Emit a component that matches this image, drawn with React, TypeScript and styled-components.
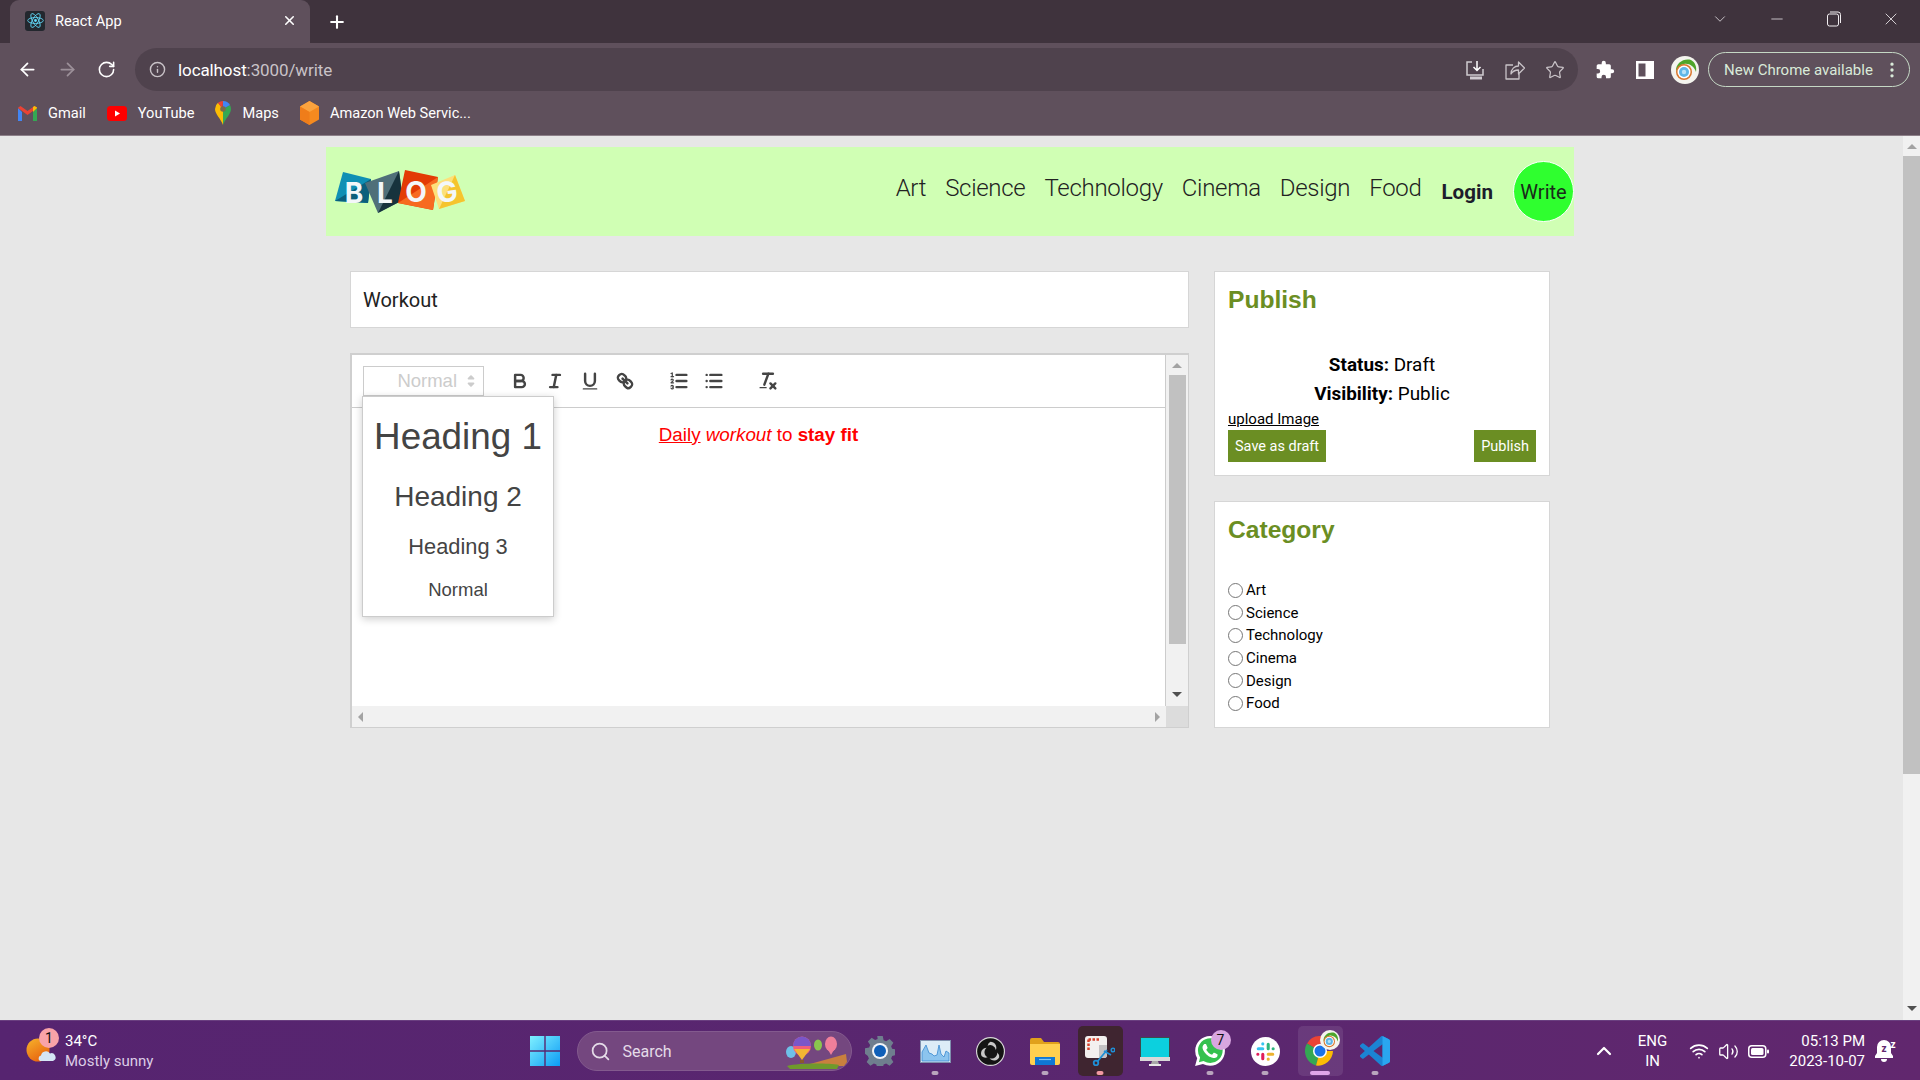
import React from "react";
import styled, { createGlobalStyle } from "styled-components";
import {
  ArrowLeft,
  ArrowRight,
  RotateCw,
  Info,
  Star,
  ChevronDown,
  ChevronUp,
  Minus,
  X,
  Plus,
  Search,
  Wifi,
  Volume2,
  MoreVertical,
} from "lucide-react";

const UI_FONT = `"Roboto", "Liberation Sans", sans-serif`;
const PAGE_FONT = `"Roboto", "Open Sans", sans-serif`;
const QUILL_FONT = `"Liberation Sans", Arial, sans-serif`;

const GlobalStyle = createGlobalStyle`
  html, body { margin: 0; padding: 0; height: 100%; overflow: hidden; }
  body { font-family: ${UI_FONT}; background: #e7e7e7; }
  * { box-sizing: border-box; }
`;

const Screen = styled.div`
  width: 1920px;
  height: 1080px;
  display: flex;
  flex-direction: column;
`;

/* ---------- browser chrome ---------- */

const TabStrip = styled.div`
  height: 43px;
  background: #3f333d;
  display: flex;
  align-items: stretch;
  padding-left: 10px;
  color: #fff;
`;

const Tab = styled.div`
  width: 300px;
  background: #5f505c;
  border-radius: 9px 9px 0 0;
  display: flex;
  align-items: center;
  padding: 0 13px 2px 15px;
  gap: 10px;
  font-size: 14.6px;
`;

const Favicon = styled.div`
  width: 20px;
  height: 20px;
  border-radius: 3px;
  background: #23272e;
  display: flex;
  align-items: center;
  justify-content: center;
`;

const TabTitle = styled.span`
  flex: 1;
`;

const NewTab = styled.div`
  width: 54px;
  display: flex;
  align-items: center;
  justify-content: center;
`;

const WindowControls = styled.div`
  margin-left: auto;
  display: flex;
  align-items: center;
  padding: 0 1px 5px 0;
`;

const WindowButton = styled.div`
  width: 57px;
  display: flex;
  justify-content: center;
  color: #f2eef1;
`;

const ToolbarRow = styled.div`
  height: 48px;
  background: #5f505c;
  display: flex;
  align-items: center;
  padding: 5px 10px 0 0;
`;

const NavIcons = styled.div`
  width: 135px;
  display: flex;
  align-items: center;
  padding-left: 17px;
  gap: 19px;
  color: #fff;
`;

const UrlBar = styled.div`
  width: 1443px;
  height: 43px;
  border-radius: 22px;
  background: #4f424d;
  display: flex;
  align-items: center;
  padding: 0 13px 0 14px;
  color: #c9c3c8;
`;

const UrlText = styled.span`
  margin-left: 12px;
  font-size: 17px;
  color: #fff;
  flex: 1;
  letter-spacing: -0.1px;

  span {
    color: #c9c3c8;
  }
`;

const UrlActions = styled.div`
  display: flex;
  gap: 20px;
  align-items: center;
`;

const ExtIcons = styled.div`
  display: flex;
  align-items: center;
  margin-left: 17px;
  color: #fff;

  svg:nth-child(2) {
    margin: 0 17px 0 21px;
  }
`;

const UpdateChip = styled.div`
  margin-left: 9px;
  width: 202px;
  height: 35px;
  border: 1px solid #c5d8c5;
  border-radius: 18px;
  display: flex;
  align-items: center;
  justify-content: space-between;
  padding: 0 7px 0 15px;
  font-size: 15px;
  color: #d9ead9;
`;

const BookmarkRow = styled.div`
  height: 45px;
  background: #5f505c;
  border-bottom: 1px solid #8d8089;
  display: flex;
  align-items: center;
  padding-left: 18px;
  gap: 21px;
`;

const Bookmark = styled.div`
  display: flex;
  align-items: center;
  gap: 11px;
  color: #fff;
  font-size: 14.6px;
`;

/* ---------- page ---------- */

const Viewport = styled.div`
  flex: 1;
  min-height: 0;
  display: flex;
`;

const Page = styled.div`
  flex: 1;
  background: #e7e7e7;
  padding-top: 11px;
  font-family: ${PAGE_FONT};
`;

const Container = styled.div`
  width: 1248px;
  margin-left: 326px;
`;

const Navbar = styled.div`
  height: 89px;
  background: #d0ffb4;
  display: flex;
  align-items: center;
  padding-left: 8px;
`;

const NavLinks = styled.div`
  margin-left: auto;
  display: flex;
  align-items: center;
  gap: 19px;
  color: #222;
`;

const NavLink = styled.span`
  font-size: 24px;
  font-weight: 300;
  letter-spacing: -0.3px;
  margin-top: -8px;
`;

const Login = styled.span`
  font-size: 20.6px;
  font-weight: 700;
  color: #1d1d2b;
  margin: 0 1px;
`;

const WriteButton = styled.div`
  width: 61px;
  height: 61px;
  border-radius: 50%;
  background: #2fff2f;
  border: 1px solid #fff;
  display: flex;
  align-items: center;
  justify-content: center;
  font-size: 20px;
  font-weight: 400;
  color: #1a2a1a;
`;

const Content = styled.div`
  display: flex;
  gap: 25px;
  padding: 35px 24px 0;
`;

const MainColumn = styled.div`
  width: 839px;
  display: flex;
  flex-direction: column;
  gap: 25px;
`;

const TitleInput = styled.div`
  height: 57px;
  background: #fff;
  border: 1px solid #d6d6d6;
  display: flex;
  align-items: center;
  padding-left: 12px;
  font-size: 20px;
  color: #222;
`;

const EditorFrame = styled.div`
  position: relative;
  height: 375px;
  display: grid;
  grid-template-columns: 1fr 22px;
  grid-template-rows: 1fr 21px;
  border: solid #cfcfcf;
  border-width: 2px 1px 1px 2px;
  font-family: ${QUILL_FONT};
`;

const EditorPane = styled.div`
  background: #fff;
  border-right: 1px solid #ccc;
  display: flex;
  flex-direction: column;
`;

const QuillToolbar = styled.div`
  height: 53px;
  border-bottom: 1px solid #ccc;
  display: flex;
  align-items: center;
  padding-left: 11px;
`;

const PickerLabel = styled.div`
  width: 121px;
  height: 31px;
  margin-right: 18px;
  border: 1px solid #ccc;
  border-bottom-width: 2px;
  display: flex;
  align-items: center;
  justify-content: flex-end;
  padding-right: 1px;
  gap: 3px;
  color: #ccc;
  font-size: 18.5px;
`;

const QuillGroup = styled.div`
  display: flex;
  margin-right: 19px;
`;

const QuillButton = styled.div`
  width: 35px;
  display: flex;
  justify-content: center;
`;

const QuillBody = styled.div`
  flex: 1;
  padding-top: 14px;
  text-align: center;
  font-size: 18.8px;
  line-height: 26px;
  color: #f00;
`;

const PickerMenu = styled.div`
  position: absolute;
  left: 10px;
  top: 41px;
  width: 192px;
  height: 221px;
  background: #fff;
  border: 1px solid #ccc;
  box-shadow: rgba(0, 0, 0, 0.2) 0 2px 8px;
  display: flex;
  flex-direction: column;
  align-items: center;
  color: #444;
`;

const PickerItem = styled.div<{ $size: number; $top: number }>`
  font-size: ${(p) => p.$size}px;
  line-height: 1;
  margin-top: ${(p) => p.$top}px;
`;

const VTrack = styled.div`
  background: #f1f1f1;
  display: flex;
  flex-direction: column;
  align-items: center;
  padding-top: 8px;
`;

const VThumb = styled.div`
  width: 17px;
  height: 269px;
  margin: 7px 0 48px;
  background: #c1c1c1;
`;

const HTrack = styled.div`
  background: #f1f1f1;
  display: flex;
  align-items: center;
  justify-content: space-between;
  padding: 0 6px;
`;

const ScrollCorner = styled.div`
  background: #dcdcdc;
`;

const SideColumn = styled.div`
  width: 336px;
  display: flex;
  flex-direction: column;
  gap: 25px;
`;

const Panel = styled.div<{ $height: number }>`
  height: ${(p) => p.$height}px;
  background: #fff;
  border: 1px solid #d6d6d6;
  padding: 0 13px;
  font-size: 18.9px;
  color: #000;
`;

const PanelTitle = styled.h2`
  margin: 13px 0 0;
  font-family: ${QUILL_FONT};
  font-size: 24.6px;
  font-weight: 700;
  line-height: 30px;
  color: #6b8e23;
`;

const MetaLine = styled.div<{ $top?: number }>`
  margin-top: ${(p) => p.$top ?? 0}px;
  text-align: center;
  line-height: 29px;
`;

const UploadLink = styled.div`
  font-size: 15px;
  line-height: 22px;
  text-decoration: underline;
`;

const PanelActions = styled.div`
  display: flex;
  justify-content: space-between;
`;

const GreenButton = styled.div`
  height: 32px;
  padding: 0 7px;
  background: #6b8e23;
  color: #fff;
  font-size: 14.5px;
  display: flex;
  align-items: center;
`;

const RadioList = styled.div`
  margin-top: 34px;
  display: flex;
  flex-direction: column;
`;

const RadioRow = styled.label`
  height: 22.6px;
  display: flex;
  align-items: center;
  gap: 3px;
  font-size: 15px;

  input {
    width: 15px;
    height: 15px;
    margin: 0;
  }
`;

const PageScrollbar = styled.div`
  width: 17px;
  background: #f1f1f1;
  display: flex;
  flex-direction: column;
  align-items: center;
  padding-top: 8px;
`;

const PageThumb = styled.div`
  width: 17px;
  height: 618px;
  margin: 7px 0 232px;
  background: #c1c1c1;
`;

const Arrow = styled.div<{ $dir: "up" | "down" | "left" | "right"; $dark?: boolean }>`
  width: 0;
  height: 0;
  border: 5px solid transparent;
  ${(p) => {
    const colour = p.$dark ? "#505050" : "#a3a3a3";
    switch (p.$dir) {
      case "up":
        return `border-top-width: 0; border-bottom: 5px solid ${colour};`;
      case "down":
        return `border-bottom-width: 0; border-top: 5px solid ${colour};`;
      case "left":
        return `border-left-width: 0; border-right: 5px solid ${colour};`;
      default:
        return `border-right-width: 0; border-left: 5px solid ${colour};`;
    }
  }}
`;

/* ---------- taskbar ---------- */

const Taskbar = styled.div`
  height: 60px;
  background: linear-gradient(90deg, #562470 0%, #5a276f 60%, #61276e 100%);
  border-top: 1px solid #6a3f80;
  display: grid;
  grid-template-columns: 1fr auto 1fr;
  align-items: center;
  color: #fff;
`;

const Weather = styled.div`
  display: flex;
  align-items: center;
  gap: 5px;
  padding-left: 26px;
  font-size: 15px;
  line-height: 20px;
`;

const WeatherIcon = styled.div`
  position: relative;
  width: 34px;
  height: 34px;
`;

const Badge = styled.span<{ $bg: string; $left: number; $top: number }>`
  position: absolute;
  left: ${(p) => p.$left}px;
  top: ${(p) => p.$top}px;
  width: 20px;
  height: 20px;
  border-radius: 50%;
  background: ${(p) => p.$bg};
  color: #111;
  font-size: 14px;
  line-height: 20px;
  text-align: center;
`;

const WeatherSub = styled.div`
  color: #dccde6;
`;

const CenterIcons = styled.div`
  display: flex;
  align-items: center;
`;

const Slot = styled.div<{ $tone?: "dark" | "light" }>`
  position: relative;
  width: 55px;
  height: 60px;
  display: flex;
  align-items: center;
  justify-content: center;

  &::before {
    content: "";
    position: absolute;
    inset: 5px;
    border-radius: 5px;
    background: ${(p) =>
      p.$tone === "dark" ? "#3f2530" : p.$tone === "light" ? "rgba(255,255,255,0.09)" : "transparent"};
  }

  svg {
    position: relative;
  }
`;

const Dot = styled.span<{ $colour?: string; $wide?: boolean }>`
  position: absolute;
  bottom: 6px;
  left: 50%;
  width: ${(p) => (p.$wide ? 20 : 7)}px;
  height: 4px;
  border-radius: 2px;
  transform: translateX(-50%);
  background: ${(p) => p.$colour ?? "#b9a5bd"};
`;

const AvatarBadge = styled.span`
  position: absolute;
  left: 27px;
  top: 9px;
`;

const SearchBox = styled.div`
  position: relative;
  width: 275px;
  height: 40px;
  margin-left: 4px;
  margin-right: 1px;
  border-radius: 20px;
  background: #74477f;
  border: 1px solid #835a8e;
  display: flex;
  align-items: center;
  padding-left: 12px;
  gap: 12px;
  font-size: 16px;
  color: #e4dbe8;
`;

const SearchArt = styled.svg`
  position: absolute;
  right: 3px;
  top: 4px;
`;

const Tray = styled.div`
  display: flex;
  align-items: center;
  justify-content: flex-end;
  font-size: 15px;
`;

const TrayLang = styled.div`
  text-align: center;
  line-height: 20px;
  margin: 0 22px;
`;

const TrayIcons = styled.div`
  display: flex;
  align-items: center;
  gap: 9px;
`;

const Clock = styled.div`
  text-align: right;
  line-height: 20px;
  margin-left: 20px;
`;

const BellWrap = styled.div`
  width: 55px;
  padding-right: 14px;
  display: flex;
  justify-content: center;
`;

/* ---------- drawings ---------- */

const ReactMark = () => (
  <svg width="17" height="17" viewBox="-12 -12 24 24" fill="none" stroke="#61dafb" strokeWidth="1.2">
    <circle r="2" fill="#61dafb" stroke="none" />
    <ellipse rx="11" ry="4.2" />
    <ellipse rx="11" ry="4.2" transform="rotate(60)" />
    <ellipse rx="11" ry="4.2" transform="rotate(120)" />
  </svg>
);

const GmailIcon = () => (
  <svg width="19" height="15" viewBox="0 0 19 15">
    <path d="M0 2v13h4V6z" fill="#4285f4" />
    <path d="M19 2v13h-4V6z" fill="#34a853" />
    <path d="M0 2l9.500 7L19 2v-.2L16.500 0 9.500 5 2.500 0 0 1.800z" fill="#ea4335" />
    <path d="M15 6l4-4V1.500L16.500 0 15 1z" fill="#fbbc04" />
  </svg>
);

const YouTubeIcon = () => (
  <svg width="20" height="15" viewBox="0 0 20 15">
    <rect width="20" height="15" rx="3.500" fill="#f00" />
    <path d="M8 4.500v6l5-3z" fill="#fff" />
  </svg>
);

const MapsIcon = () => (
  <svg width="16" height="24" viewBox="0 0 16 24">
    <path d="M8 24C6 18 0 13 0 8a8 8 0 0 1 3-6.200L8 8z" fill="#fbbc04" />
    <path d="M8 24c2-6 8-11 8-16 0-1.500-.4-2.800-1-4L8 8z" fill="#34a853" />
    <path d="M3 1.800A8 8 0 0 1 8 0l-.500 8z" fill="#ea4335" />
    <path d="M8 0a8 8 0 0 1 7 4L8 8z" fill="#4285f4" />
    <circle cx="8" cy="8" r="2.800" fill="#7a6a4a" />
  </svg>
);

const AwsIcon = () => (
  <svg width="19" height="24" viewBox="0 0 19 24">
    <path d="M9.500 0L19 5.500v13L9.500 24 0 18.500v-13z" fill="#f58a1f" />
    <path d="M9.500 11L19 5.500 9.500 0 0 5.500z" fill="#fba33e" />
    <path d="M9.500 11v13L0 18.500v-13z" fill="#ef7d1a" />
  </svg>
);

const InstallIcon = () => (
  <svg width="20" height="20" viewBox="0 0 20 20" fill="none" stroke="#d0cbd0" strokeWidth="1.500">
    <path d="M7 2H2v13h16V9" />
    <path d="M12 1v9M8.500 7l3.500 3.500L15.500 7" stroke="#fff" />
    <path d="M5 18h12" strokeWidth="3" />
  </svg>
);

const ShareIcon = () => (
  <svg width="20" height="20" viewBox="0 0 20 20" fill="none" stroke="#c9c3c8" strokeWidth="1.300" strokeLinejoin="round">
    <path d="M8 5H1v14h13v-5" />
    <path d="M6 14c0-5 3.500-8 7.500-8V2l6 6-6 6v-4c-3 0-6 1.500-7.500 4z" />
  </svg>
);

const PuzzleIcon = () => (
  <svg width="20" height="20" viewBox="0 0 24 24" fill="#fff">
    <path d="M20.500 11H19V7a2 2 0 0 0-2-2h-4V3.500a2.500 2.500 0 0 0-5 0V5H4a2 2 0 0 0-2 2v3.800h1.500a2.700 2.700 0 0 1 0 5.400H2V20a2 2 0 0 0 2 2h3.800v-1.500a2.700 2.700 0 0 1 5.400 0V22H17a2 2 0 0 0 2-2v-4h1.500a2.500 2.500 0 0 0 0-5z" />
  </svg>
);

const SidebarIcon = () => (
  <svg width="18" height="18" viewBox="0 0 18 18">
    <path d="M0 0h18v18H0zM2.500 2.500v13h7v-13z" fill="#fff" fillRule="evenodd" />
  </svg>
);

const AvatarIcon = ({ size = 28 }: { size?: number }) => (
  <svg width={size} height={size} viewBox="0 0 28 28">
    <circle cx="14" cy="14" r="14" fill="#f4f4ee" />
    <path d="M5 16C4 7 13 2 20 4c4 2 6 7 5 12-2-6-7-9-12-8-4 1-7 4-8 8z" fill="#4ea52a" />
    <circle cx="13" cy="16" r="8" fill="#d9762c" />
    <circle cx="13" cy="16" r="6.500" fill="#fff" />
    <circle cx="13" cy="16" r="5" fill="#5fb6e6" />
    <circle cx="13" cy="16" r="2.200" fill="#b9e2f6" />
  </svg>
);

const BlogLogo = () => (
  <svg width="132" height="44" viewBox="0 0 132 44" fontFamily="Inter, Lato, sans-serif" fontWeight="700" fontSize="28" fill="#f3f7f9" textAnchor="middle">
    <path d="M9 2l28 7-3 24-33-2z" fill="#0f8fb4" />
    <path d="M37 9l-3 24-33-2z" fill="#0b5f7c" />
    <path d="M31 13L65 1l4 29-25 13z" fill="#4f6f79" />
    <path d="M65 1l4 29-25 13z" fill="#17333d" />
    <path d="M71 0l33 7-5 33-35-7z" fill="#e33b05" />
    <path d="M104 7l-5 33-35-7z" fill="#f76a20" />
    <path d="M97 15l24-10 10 26-26 8z" fill="#fde07a" />
    <path d="M121 5l10 26-26 8z" fill="#f5c42e" />
    <text x="20" y="33">B</text>
    <text x="51" y="33">L</text>
    <text x="82" y="32">O</text>
    <text x="113" y="32" transform="rotate(-8 113 22)">G</text>
  </svg>
);

const QuillIcon = ({ children }: { children: React.ReactNode }) => (
  <svg width="22" height="22" viewBox="0 0 18 18" fill="none" stroke="#444" strokeWidth="2" strokeLinecap="round" strokeLinejoin="round">
    {children}
  </svg>
);

const PickerArrows = () => (
  <svg width="22" height="22" viewBox="0 0 18 18" fill="#ccc" stroke="#ccc" strokeWidth="1.500" strokeLinejoin="round">
    <polygon points="7 11 9 13 11 11 7 11" />
    <polygon points="7 7 9 5 11 7 7 7" />
  </svg>
);

const GearIcon = () => (
  <svg width="30" height="30" viewBox="0 0 24 24">
    <path
      fill="#6f7e8e"
      d="M9.800 0h4.400l.7 3.300 2 .8 2.800-1.800 3 3-1.800 2.800.8 2 3.300.7v4.400l-3.300.7-.8 2 1.800 2.800-3 3-2.800-1.800-2 .8-.7 3.300H9.800l-.7-3.300-2-.8-2.800 1.800-3-3 1.800-2.800-.8-2L0 14.200V9.800l3.300-.7.8-2L2.300 4.300l3-3 2.800 1.800 2-.8z"
    />
    <circle cx="12" cy="12" r="6.400" fill="#f2f4f7" />
    <circle cx="12" cy="12" r="4.800" fill="#0f5fb8" />
  </svg>
);

const WindowsLogo = () => (
  <svg width="30" height="30" viewBox="0 0 30 30">
    <defs>
      <linearGradient id="win" x1="0" y1="0" x2="1" y2="1">
        <stop offset="0" stopColor="#7ff0ff" />
        <stop offset="1" stopColor="#0c9bf5" />
      </linearGradient>
    </defs>
    <path d="M0 0h14.300v14.300H0zM15.700 0H30v14.300H15.700zM0 15.700h14.300V30H0zM15.700 15.700H30V30H15.700z" fill="url(#win)" />
  </svg>
);

const ResourceIcon = () => (
  <svg width="31" height="23" viewBox="0 0 31 23">
    <rect x="0.500" y="0.500" width="30" height="22" fill="#dcecf7" stroke="#7f90ad" />
    <path d="M2 21v-9l4-7 3 8 3 1 2 2 3-1 2-10 2 9 3 3 2-6 3 2v8z" fill="#8cc4ee" stroke="#3a8ad0" strokeWidth="0.800" />
  </svg>
);

const ObsIcon = () => (
  <svg width="29" height="29" viewBox="0 0 30 30" fill="none">
    <circle cx="15" cy="15" r="15" fill="#d8d8d8" />
    <circle cx="15" cy="15" r="13.800" fill="#141414" />
    <path d="M15 5a6 6 0 0 1 5.500 8.500A6 6 0 0 0 12 9a6 6 0 0 1 3-4zM24 21a6 6 0 0 1-10 1 6 6 0 0 0 8-6 6 6 0 0 1 2 5zM6 20a6 6 0 0 1 5-9 6 6 0 0 0 1 10 6 6 0 0 1-6-1z" fill="#c8c8c8" />
  </svg>
);

const FolderIcon = () => (
  <svg width="30" height="27" viewBox="0 0 30 27">
    <path d="M0 2a2 2 0 0 1 2-2h9l3 4h14a2 2 0 0 1 2 2v3H0z" fill="#e0a11b" />
    <path d="M0 6h30v19a2 2 0 0 1-2 2H2a2 2 0 0 1-2-2z" fill="#ffd04f" />
    <path d="M5 19h20v8H5z" fill="#0f78d4" />
    <path d="M9 21.500h12" stroke="#7fc6f5" strokeWidth="1.200" />
  </svg>
);

const SnipIcon = () => (
  <svg width="30" height="30" viewBox="0 0 30 30" fill="none">
    <rect x="0" y="0" width="22" height="22" rx="3" fill="#f3f0ef" />
    <path d="M14 22h5a3 3 0 0 0 3-3V9h-8z" fill="#c4c2c4" />
    <path d="M3.500 3.500h11M3.500 3.500v11" stroke="#d8402c" strokeWidth="2.500" strokeDasharray="2.500 1.500" />
    <path d="M12 26L22 14M19 15l7 4" stroke="#1f8fd6" strokeWidth="1.800" />
    <circle cx="11" cy="27" r="2.300" stroke="#1f8fd6" strokeWidth="1.800" />
    <circle cx="28" cy="14" r="1.800" stroke="#1f8fd6" strokeWidth="1.500" />
  </svg>
);

const MonitorIcon = () => (
  <svg width="30" height="29" viewBox="0 0 30 29">
    <rect width="30" height="23" fill="#3f4a4c" />
    <rect x="1" y="1" width="28" height="19" fill="#0cd0de" />
    <rect y="20" width="30" height="4" fill="#d9d9d9" />
    <path d="M12 24h6l1 3h-8z" fill="#a8a8a8" />
    <path d="M9 27h12v2H9z" fill="#e8e8e8" />
  </svg>
);

const WhatsAppIcon = () => (
  <svg width="30" height="30" viewBox="0 0 24 24">
    <path d="M.057 24l1.688-6.163A11.867 11.867 0 0 1 .157 11.892C.16 5.335 5.495 0 12.050 0a11.820 11.820 0 0 1 8.413 3.488 11.824 11.824 0 0 1 3.480 8.414c-.003 6.558-5.338 11.893-11.893 11.893a11.900 11.900 0 0 1-5.688-1.448z" fill="#fff" />
    <path d="M3.100 20.900l.998-3.648-.235-.374a9.860 9.860 0 0 1-1.510-5.260c.001-5.450 4.436-9.884 9.888-9.884a9.830 9.830 0 0 1 6.988 2.898 9.825 9.825 0 0 1 2.893 6.994c-.003 5.450-4.437 9.884-9.885 9.884a9.870 9.870 0 0 1-5.031-1.378l-.361-.214z" fill="#35c14f" />
    <path d="M17.472 14.382c-.297-.149-1.758-.867-2.030-.967-.273-.099-.471-.148-.670.150-.197.297-.767.966-.940 1.164-.173.199-.347.223-.644.075-.297-.150-1.255-.463-2.390-1.475-.883-.788-1.480-1.761-1.653-2.059-.173-.297-.018-.458.130-.606.134-.133.298-.347.446-.520.149-.174.198-.298.298-.497.099-.198.050-.371-.025-.520-.075-.149-.669-1.612-.916-2.207-.242-.579-.487-.500-.669-.510-.173-.008-.371-.010-.570-.010-.198 0-.520.074-.792.372-.272.297-1.040 1.016-1.040 2.479 0 1.462 1.065 2.875 1.213 3.074.149.198 2.096 3.200 5.077 4.487.709.306 1.262.489 1.694.625.712.227 1.360.195 1.871.118.571-.085 1.758-.719 2.006-1.413.248-.694.248-1.289.173-1.413-.074-.124-.272-.198-.570-.347z" fill="#fff" />
  </svg>
);

const SlackIcon = () => (
  <svg width="29" height="29" viewBox="-4 -4 32 32">
    <circle cx="12" cy="12" r="16" fill="#fff" />
    <g strokeWidth="3.400" strokeLinecap="round" fill="none">
      <path d="M4 9h5M9 3.500v.1" stroke="#36c5f0" />
      <path d="M15 4v5M20.500 9h-.1" stroke="#2eb67d" />
      <path d="M20 15h-5M15 20.500v-.1" stroke="#ecb22e" />
      <path d="M9 20v-5M3.500 15h.1" stroke="#e01e5a" />
    </g>
  </svg>
);

const ChromeIcon = () => (
  <svg width="30" height="30" viewBox="0 0 30 30">
    <path d="M15 15L2 7.500A15 15 0 0 1 28 7.500H15z" fill="#ea4335" />
    <path d="M15 15L2 7.500A15 15 0 0 0 11 29.500z" fill="#34a853" />
    <path d="M15 15h13A15 15 0 0 1 11 29.500z" fill="#fbbc04" />
    <circle cx="15" cy="15" r="7" fill="#fff" />
    <circle cx="15" cy="15" r="5.500" fill="#1a73e8" />
  </svg>
);

const VsCodeIcon = () => (
  <svg width="30" height="30" viewBox="0 0 24 24">
    <path fill="#1b84d4" d="M23.150 2.587L18.210.210a1.494 1.494 0 0 0-1.705.290l-9.460 8.630-4.120-3.128a.999.999 0 0 0-1.276.057L.327 7.261A1 1 0 0 0 .326 8.740L3.899 12 .326 15.260a1 1 0 0 0 .001 1.479L1.650 17.940a.999.999 0 0 0 1.276.057l4.120-3.128 9.460 8.630a1.492 1.492 0 0 0 1.704.290l4.942-2.377A1.500 1.500 0 0 0 24 20.060V3.939a1.500 1.500 0 0 0-.850-1.352zm-5.146 14.861L10.826 12l7.178-5.448v10.896z" />
    <path fill="#2aa6ef" d="M18.004 0.070l5.146 2.517A1.500 1.500 0 0 1 24 3.939V20.060a1.500 1.500 0 0 1-.850 1.352L18.004 23.900z" />
  </svg>
);

const SunIcon = () => (
  <svg width="34" height="34" viewBox="0 0 34 34">
    <defs>
      <linearGradient id="sun" x1="0" y1="0" x2="0.600" y2="1">
        <stop offset="0" stopColor="#f6b42c" />
        <stop offset="1" stopColor="#e8630f" />
      </linearGradient>
    </defs>
    <circle cx="12" cy="16" r="11.500" fill="url(#sun)" />
    <path d="M14 27a3 3 0 0 1 1-5.500 5 5 0 0 1 9-2 4 4 0 0 1 3 7.500z" fill="#d5e6f5" />
  </svg>
);

const BalloonArt = () => (
  <SearchArt width="62" height="33" viewBox="0 0 62 33">
    <path d="M24 28L60 18l1 8-3 4H26z" fill="#c9803e" />
    <path d="M1 30c12-3 40-3 52-1l-2 4H4z" fill="#6f9a2c" />
    <ellipse cx="5" cy="16" rx="5" ry="6" fill="#6ec0e8" />
    <ellipse cx="16" cy="10" rx="9" ry="9.500" fill="#ef5f7a" />
    <path d="M7 10a9 9.500 0 0 1 18 0z" fill="#7a56c8" />
    <path d="M8 13l8 11 8-11z" fill="#f2b533" />
    <rect x="14" y="24" width="4" height="3" fill="#8a5a2c" />
    <ellipse cx="32" cy="9" rx="4" ry="5.500" fill="#8ac64e" />
    <ellipse cx="45" cy="8" rx="6" ry="7.500" fill="#ef7f9a" />
    <path d="M41 12l4 7 4-7z" fill="#ef7f9a" />
  </SearchArt>
);

const BatteryIcon = () => (
  <svg width="21" height="13" viewBox="0 0 21 13">
    <rect x="0.750" y="0.750" width="17" height="11.500" rx="3" fill="none" stroke="#fff" strokeWidth="1.500" />
    <rect x="3" y="3" width="12.500" height="7" rx="1.500" fill="#fff" />
    <rect x="19" y="4.500" width="2" height="4" rx="1" fill="#fff" />
  </svg>
);

const SnoozeBell = () => (
  <svg width="24" height="24" viewBox="0 0 24 24">
    <path d="M10 1a7 7 0 0 0-7 7v6l-2 3h18l-2-3V8a7 7 0 0 0-7-7z" fill="#fff" />
    <rect x="1" y="17" width="18" height="2" fill="#fff" />
    <path d="M7 20h6a3 3 0 0 1-6 0z" fill="#fff" />
    <text x="10" y="13" fontSize="10" fontWeight="700" textAnchor="middle" fill="#61276e" fontFamily="Roboto, sans-serif">z</text>
    <text x="19" y="9" fontSize="10" fontWeight="700" textAnchor="middle" fill="#fff" fontFamily="Roboto, sans-serif">z</text>
  </svg>
);

const CATEGORIES = ["Art", "Science", "Technology", "Cinema", "Design", "Food"];

const App = () => (
  <Screen>
    <GlobalStyle />

    <TabStrip>
      <Tab>
        <Favicon>
          <ReactMark />
        </Favicon>
        <TabTitle>React App</TabTitle>
        <X size={15} strokeWidth={2.5} />
      </Tab>
      <NewTab>
        <Plus size={20} strokeWidth={2.5} />
      </NewTab>
      <WindowControls>
        <WindowButton>
          <ChevronDown size={18} strokeWidth={1} />
        </WindowButton>
        <WindowButton>
          <Minus size={18} strokeWidth={1} />
        </WindowButton>
        <WindowButton>
          <svg width="14" height="16" viewBox="0 0 14 16" fill="none" stroke="#f2eef1">
            <rect x="0.500" y="3" width="11" height="12" rx="2" />
            <path d="M3 1h8a2.500 2.500 0 0 1 2.500 2.500V12" />
          </svg>
        </WindowButton>
        <WindowButton>
          <X size={20} strokeWidth={1} />
        </WindowButton>
      </WindowControls>
    </TabStrip>

    <ToolbarRow>
      <NavIcons>
        <ArrowLeft size={21} strokeWidth={2} />
        <ArrowRight size={21} strokeWidth={2} color="#9c9099" />
        <RotateCw size={19} strokeWidth={2} />
      </NavIcons>
      <UrlBar>
        <Info size={17} />
        <UrlText>
          localhost<span>:3000/write</span>
        </UrlText>
        <UrlActions>
          <InstallIcon />
          <ShareIcon />
          <Star size={20} strokeWidth={1.5} />
        </UrlActions>
      </UrlBar>
      <ExtIcons>
        <PuzzleIcon />
        <SidebarIcon />
        <AvatarIcon />
      </ExtIcons>
      <UpdateChip>
        New Chrome available
        <MoreVertical size={20} />
      </UpdateChip>
    </ToolbarRow>

    <BookmarkRow>
      <Bookmark>
        <GmailIcon />
        Gmail
      </Bookmark>
      <Bookmark>
        <YouTubeIcon />
        YouTube
      </Bookmark>
      <Bookmark>
        <MapsIcon />
        Maps
      </Bookmark>
      <Bookmark>
        <AwsIcon />
        Amazon Web Servic...
      </Bookmark>
    </BookmarkRow>

    <Viewport>
      <Page>
        <Container>
          <Navbar>
            <BlogLogo />
            <NavLinks>
              <NavLink>Art</NavLink>
              <NavLink>Science</NavLink>
              <NavLink>Technology</NavLink>
              <NavLink>Cinema</NavLink>
              <NavLink>Design</NavLink>
              <NavLink>Food</NavLink>
              <Login>Login</Login>
              <WriteButton>Write</WriteButton>
            </NavLinks>
          </Navbar>

          <Content>
            <MainColumn>
              <TitleInput>Workout</TitleInput>
              <EditorFrame>
                <EditorPane>
                  <QuillToolbar>
                    <PickerLabel>
                      Normal
                      <PickerArrows />
                    </PickerLabel>
                    <QuillGroup>
                      <QuillButton>
                        <QuillIcon>
                          <path d="M5,4H9.500A2.500,2.500,0,0,1,12,6.500v0A2.500,2.500,0,0,1,9.500,9H5A0,0,0,0,1,5,9V4A0,0,0,0,1,5,4Z" />
                          <path d="M5,9h5.500A2.500,2.500,0,0,1,13,11.500v0A2.500,2.500,0,0,1,10.500,14H5a0,0,0,0,1,0,0V9A0,0,0,0,1,5,9Z" />
                        </QuillIcon>
                      </QuillButton>
                      <QuillButton>
                        <QuillIcon>
                          <line x1="7" x2="13" y1="4" y2="4" />
                          <line x1="5" x2="11" y1="14" y2="14" />
                          <line x1="8" x2="10" y1="14" y2="4" />
                        </QuillIcon>
                      </QuillButton>
                      <QuillButton>
                        <QuillIcon>
                          <path d="M5,3V9a4.012,4.012,0,0,0,4,4H9a4.012,4.012,0,0,0,4-4V3" />
                          <rect x="3" y="15" width="12" height="1" rx="0.500" ry="0.500" fill="#444" stroke="none" />
                        </QuillIcon>
                      </QuillButton>
                      <QuillButton>
                        <QuillIcon>
                          <line x1="7" x2="11" y1="7" y2="11" />
                          <path d="M8.900,4.577a3.476,3.476,0,0,1,.36,4.679A3.476,3.476,0,0,1,4.577,8.900C3.185,7.500,2.035,6.400,4.217,4.217S7.500,3.185,8.900,4.577Z" />
                          <path d="M13.423,9.100a3.476,3.476,0,0,0-4.679-.36,3.476,3.476,0,0,0,.36,4.679c1.392,1.392,2.500,2.542,4.679.36S14.815,10.500,13.423,9.100Z" />
                        </QuillIcon>
                      </QuillButton>
                    </QuillGroup>
                    <QuillGroup>
                      <QuillButton>
                        <QuillIcon>
                          <line x1="7" x2="15" y1="4" y2="4" />
                          <line x1="7" x2="15" y1="9" y2="9" />
                          <line x1="7" x2="15" y1="14" y2="14" />
                          <line x1="2.500" x2="4.500" y1="5.500" y2="5.500" strokeWidth="1" />
                          <path fill="#444" stroke="none" d="M3.500,6A0.500,0.500,0,0,1,3,5.500V3.085l-0.276.138A0.500,0.500,0,0,1,2.053,3c-0.124-.247-0.023-0.324.224-0.447l1-.5A0.500,0.500,0,0,1,4,2.500v3A0.500,0.500,0,0,1,3.500,6Z" />
                          <path strokeWidth="1" d="M4.500,10.500h-2c0-.234,1.850-1.076,1.850-2.234A0.959,0.959,0,0,0,2.500,8.156" />
                          <path strokeWidth="1" d="M2.500,14.846a0.959,0.959,0,0,0,1.850-.109A0.700,0.700,0,0,0,3.750,14a0.688,0.688,0,0,0,.6-0.736,0.959,0.959,0,0,0-1.850-.109" />
                        </QuillIcon>
                      </QuillButton>
                      <QuillButton>
                        <QuillIcon>
                          <line x1="6" x2="15" y1="4" y2="4" />
                          <line x1="6" x2="15" y1="9" y2="9" />
                          <line x1="6" x2="15" y1="14" y2="14" />
                          <line x1="3" x2="3" y1="4" y2="4" />
                          <line x1="3" x2="3" y1="9" y2="9" />
                          <line x1="3" x2="3" y1="14" y2="14" />
                        </QuillIcon>
                      </QuillButton>
                    </QuillGroup>
                    <QuillGroup>
                      <QuillButton>
                        <QuillIcon>
                          <line x1="5" x2="13" y1="3" y2="3" />
                          <line x1="6" x2="9.350" y1="12" y2="3" />
                          <line x1="11" x2="15" y1="11" y2="15" />
                          <line x1="15" x2="11" y1="11" y2="15" />
                          <rect x="2" y="14" width="6" height="1" rx="0.500" ry="0.500" fill="#444" stroke="none" />
                        </QuillIcon>
                      </QuillButton>
                    </QuillGroup>
                  </QuillToolbar>
                  <QuillBody>
                    <u>Daily</u> <em>workout</em> to <strong>stay fit</strong>
                  </QuillBody>
                </EditorPane>
                <VTrack>
                  <Arrow $dir="up" />
                  <VThumb />
                  <Arrow $dir="down" $dark />
                </VTrack>
                <HTrack>
                  <Arrow $dir="left" />
                  <Arrow $dir="right" />
                </HTrack>
                <ScrollCorner />
                <PickerMenu>
                  <PickerItem $size={36.8} $top={22}>Heading 1</PickerItem>
                  <PickerItem $size={28} $top={27}>Heading 2</PickerItem>
                  <PickerItem $size={21.8} $top={25}>Heading 3</PickerItem>
                  <PickerItem $size={18.5} $top={23}>Normal</PickerItem>
                </PickerMenu>
              </EditorFrame>
            </MainColumn>

            <SideColumn>
              <Panel $height={205}>
                <PanelTitle>Publish</PanelTitle>
                <MetaLine $top={35}>
                  <b>Status:</b> Draft
                </MetaLine>
                <MetaLine>
                  <b>Visibility:</b> Public
                </MetaLine>
                <UploadLink>upload Image</UploadLink>
                <PanelActions>
                  <GreenButton>Save as draft</GreenButton>
                  <GreenButton>Publish</GreenButton>
                </PanelActions>
              </Panel>
              <Panel $height={227}>
                <PanelTitle>Category</PanelTitle>
                <RadioList>
                  {CATEGORIES.map((c) => (
                    <RadioRow key={c}>
                      <input type="radio" name="cat" />
                      {c}
                    </RadioRow>
                  ))}
                </RadioList>
              </Panel>
            </SideColumn>
          </Content>
        </Container>
      </Page>
      <PageScrollbar>
        <Arrow $dir="up" />
        <PageThumb />
        <Arrow $dir="down" $dark />
      </PageScrollbar>
    </Viewport>

    <Taskbar>
      <Weather>
        <WeatherIcon>
          <SunIcon />
          <Badge $bg="#f9a3a8" $left={13} $top={-6}>1</Badge>
        </WeatherIcon>
        <div>
          <div>34°C</div>
          <WeatherSub>Mostly sunny</WeatherSub>
        </div>
      </Weather>

      <CenterIcons>
        <Slot>
          <WindowsLogo />
        </Slot>
        <SearchBox>
          <Search size={21} strokeWidth={2} />
          Search
          <BalloonArt />
        </SearchBox>
        <Slot>
          <GearIcon />
        </Slot>
        <Slot>
          <ResourceIcon />
          <Dot />
        </Slot>
        <Slot>
          <ObsIcon />
        </Slot>
        <Slot>
          <FolderIcon />
          <Dot />
        </Slot>
        <Slot $tone="dark">
          <SnipIcon />
          <Dot $colour="#f29aa2" />
        </Slot>
        <Slot>
          <MonitorIcon />
        </Slot>
        <Slot>
          <WhatsAppIcon />
          <Badge $bg="#d8a6e0" $left={28} $top={9}>7</Badge>
          <Dot />
        </Slot>
        <Slot>
          <SlackIcon />
          <Dot />
        </Slot>
        <Slot $tone="light">
          <ChromeIcon />
          <AvatarBadge>
            <AvatarIcon size={20} />
          </AvatarBadge>
          <Dot $colour="#e0a6e8" $wide />
        </Slot>
        <Slot>
          <VsCodeIcon />
          <Dot />
        </Slot>
      </CenterIcons>

      <Tray>
        <ChevronUp size={24} strokeWidth={2.2} />
        <TrayLang>
          <div>ENG</div>
          <div>IN</div>
        </TrayLang>
        <TrayIcons>
          <Wifi size={20} />
          <Volume2 size={21} strokeWidth={1.5} />
          <BatteryIcon />
        </TrayIcons>
        <Clock>
          <div>05:13 PM</div>
          <div>2023-10-07</div>
        </Clock>
        <BellWrap>
          <SnoozeBell />
        </BellWrap>
      </Tray>
    </Taskbar>
  </Screen>
);

export default App;
